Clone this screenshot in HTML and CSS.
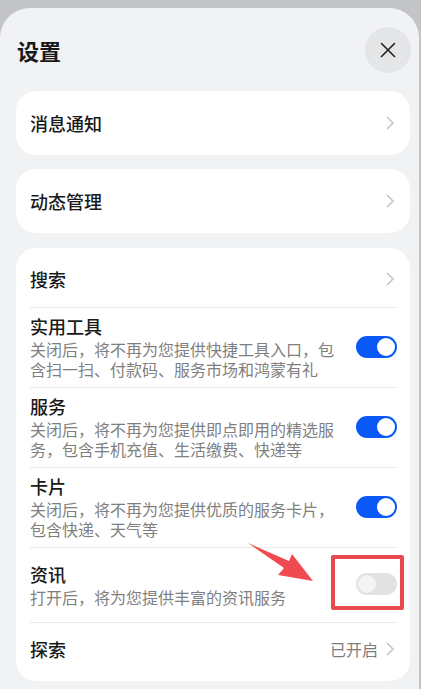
FILE: index.html
```html
<!DOCTYPE html>
<html lang="zh">
<head>
  <meta charset="UTF-8">
  <title>设置</title>
  <meta name="viewport" content="width=device-width, initial-scale=1.0">
  <link rel="stylesheet" href="styles.css">
</head>
<body>

  <div class="sheet">
    <div class="sheet-head">
      <h1>设置</h1>
      <button class="close-btn" aria-label="关闭">
        <svg width="16" height="16" viewBox="0 0 16 16"><path d="M1.5 1.5 L14.5 14.5 M14.5 1.5 L1.5 14.5" stroke="#222" stroke-width="1.6" fill="none" stroke-linecap="round"/></svg>
      </button>
    </div>

    <div class="card">
      <div class="row link">
        <span class="row-title">消息通知</span>
        <svg class="chev" width="10" height="14" viewBox="0 0 10 14"><path d="M2 1 L8 7 L2 13" stroke="#c4c4c4" stroke-width="1.5" fill="none"/></svg>
      </div>
    </div>

    <div class="card">
      <div class="row link">
        <span class="row-title">动态管理</span>
        <svg class="chev" width="10" height="14" viewBox="0 0 10 14"><path d="M2 1 L8 7 L2 13" stroke="#c4c4c4" stroke-width="1.5" fill="none"/></svg>
      </div>
    </div>

    <div class="card list">
      <div class="row link first">
        <span class="row-title">搜索</span>
        <svg class="chev" width="10" height="14" viewBox="0 0 10 14"><path d="M2 1 L8 7 L2 13" stroke="#c4c4c4" stroke-width="1.5" fill="none"/></svg>
      </div>

      <div class="row switch-row">
        <div class="row-text">
          <div class="row-title">实用工具</div>
          <div class="row-desc">关闭后，将不再为您提供快捷工具入口，包含扫一扫、付款码、服务市场和鸿蒙有礼</div>
        </div>
        <span class="switch on"></span>
      </div>

      <div class="row switch-row">
        <div class="row-text">
          <div class="row-title">服务</div>
          <div class="row-desc">关闭后，将不再为您提供即点即用的精选服务，包含手机充值、生活缴费、快递等</div>
        </div>
        <span class="switch on"></span>
      </div>

      <div class="row switch-row">
        <div class="row-text">
          <div class="row-title">卡片</div>
          <div class="row-desc">关闭后，将不再为您提供优质的服务卡片，包含快递、天气等</div>
        </div>
        <span class="switch on"></span>
      </div>

      <div class="row switch-row news">
        <div class="row-text">
          <div class="row-title">资讯</div>
          <div class="row-desc">打开后，将为您提供丰富的资讯服务</div>
        </div>
        <span class="switch"></span>

        <!-- annotation -->
        <svg class="mark-arrow" width="70" height="45" viewBox="0 0 70 45"><polygon points="0,2 41,20 44,13 65,40 30,34 36,27" fill="#ef4b50"/></svg>
        <span class="mark-box"></span>
      </div>

      <div class="row link last">
        <span class="row-title">探索</span>
        <span class="row-value">已开启</span>
        <svg class="chev" width="10" height="14" viewBox="0 0 10 14"><path d="M2 1 L8 7 L2 13" stroke="#c4c4c4" stroke-width="1.5" fill="none"/></svg>
      </div>
    </div>
  </div>

</body>
</html>
```

FILE: styles.css
```css
* { box-sizing: border-box; }

body {
  margin: 0;
  background: #c3c4c6;
  font-family: "Noto Sans CJK SC", "Noto Sans", sans-serif;
  color: #191919;
  height: 689px;
  overflow: hidden;
}

.sheet {
  margin-top: 8px;
  width: 419px;
  height: 681px;
  background: #f1f2f4;
  border-radius: 30px 30px 0 0;
  padding: 0 8px 0 16px;
}

.sheet-head {
  height: 83px;
  display: flex;
  align-items: center;
  justify-content: space-between;
}

h1 {
  margin: 0 0 0 1px;
  font-size: 22px;
  font-weight: 700;
  line-height: 30px;
}

.close-btn {
  width: 46px;
  height: 46px;
  border-radius: 50%;
  border: none;
  background: #e4e5e7;
  display: flex;
  align-items: center;
  justify-content: center;
  padding: 0;
}

.card {
  background: #fff;
  border-radius: 20px;
  margin: 0 1px 14px 0;
  padding: 0 13px 0 14px;
}

.card.list {
  margin-top: 15px;
  padding-bottom: 6px;
}

.row {
  display: flex;
  align-items: center;
}

.row.link {
  height: 64px;
}

.row-title {
  font-size: 18px;
  font-weight: 500;
  line-height: 25px;
}

.row.link .row-title {
  flex: 1;
}

.chev {
  margin-right: 2px;
}

.row-value {
  font-size: 16px;
  color: #7d7d7d;
  margin-right: 7px;
}

.card.list .row {
  border-bottom: 1px solid #e9e9e9;
}

.card.list .row.first {
  height: 60px;
  padding-top: 3px;
}

.card.list .row.last {
  height: 52px;
  border-bottom: none;
}

.switch-row {
  min-height: 75px;
  padding: 6px 0 8px;
  gap: 18px;
}

.row-text {
  flex: 1;
}

.row-desc {
  font-size: 16px;
  line-height: 20px;
  color: #7f7f7f;
}

.switch {
  flex: none;
  width: 41px;
  height: 22px;
  border-radius: 11px;
  background: #e2e2e2;
  position: relative;
}

.switch::after {
  content: "";
  position: absolute;
  top: 2px;
  left: 2px;
  width: 18px;
  height: 18px;
  border-radius: 50%;
  background: #f4f4f4;
}

.switch.on {
  background: #0a59f7;
}

.switch.on::after {
  left: 21px;
  background: #fff;
}

/* red annotation over the 资讯 row */
.news {
  position: relative;
}

.mark-arrow {
  position: absolute;
  left: 218px;
  top: -7px;
}

.mark-box {
  position: absolute;
  left: 301px;
  top: 7px;
  width: 73px;
  height: 55px;
  border: 4px solid #ea4a4f;
  border-radius: 2px;
}
```
